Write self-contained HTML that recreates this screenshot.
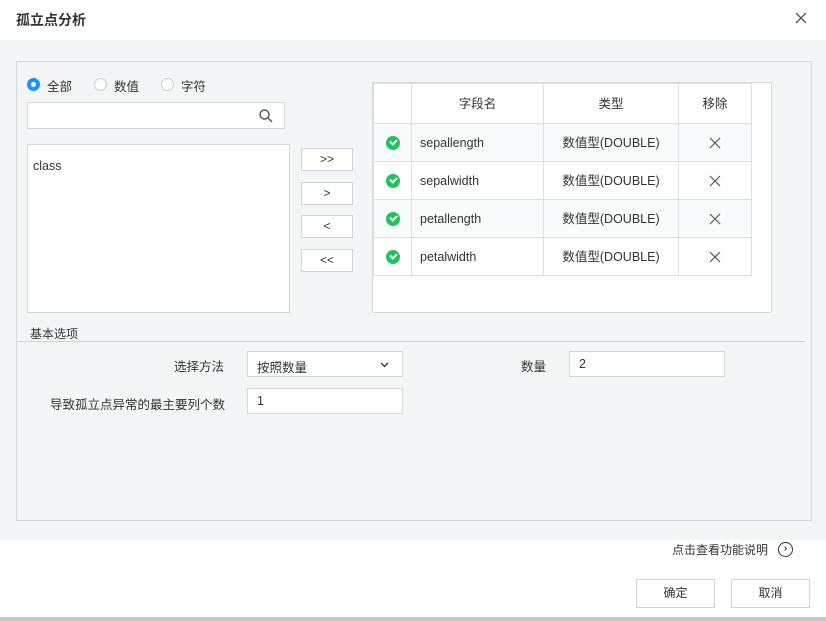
<!DOCTYPE html>
<html><head><meta charset="utf-8"><style>
*{box-sizing:border-box;margin:0;padding:0}
body{width:826px;height:621px;background:#fff;font-family:"Liberation Sans","Noto Sans CJK SC",sans-serif;font-size:12.5px;color:#333;position:relative;overflow:hidden}
.a{position:absolute}
.box{position:absolute;background:#fff;border:1px solid #d6d8dc}
.btn{position:absolute;background:#fff;border:1px solid #d0d3d8;text-align:center;font-size:12px;line-height:20px}
.radio{position:absolute;width:13px;height:13px;border:1px solid #c8ccd2;border-radius:50%;background:#fff}
table{border-collapse:collapse;position:absolute;left:373px;top:83px}
td{border:1px solid #dcdfe3;height:38px;font-size:12.5px;line-height:16px;vertical-align:middle;padding:0}
tr:nth-child(odd) td{background:#fff}
tr:nth-child(even) td{background:#f9fafc}
.chk{width:14px;height:14px;border-radius:50%;background:#1fc35d;margin:auto;position:relative}
.chk:after{content:"";position:absolute;left:4px;top:3px;width:5px;height:3px;border-left:2px solid #fff;border-bottom:2px solid #fff;transform:rotate(-45deg)}
.x{display:block;margin:auto}
</style></head><body>
<div class="a" style="left:16px;top:10px;font-size:14px;font-weight:bold;color:#333">孤立点分析</div>
<svg class="a" style="left:795px;top:12px" width="12" height="12"><path d="M1 1L11 11M11 1L1 11" stroke="#555" stroke-width="1.3"/></svg>
<div class="a" style="left:0;top:40px;width:826px;height:500px;background:#f4f5f7"></div>
<div class="a" style="left:16px;top:61px;width:796px;height:460px;border:1px solid #d6d8dc;background:#f4f5f7"></div>
<div class="radio" style="left:27px;top:78px;border:4px solid #1e90ff"></div>
<div class="a" style="left:47px;top:76px">全部</div>
<div class="radio" style="left:94px;top:78px"></div>
<div class="a" style="left:114px;top:76px">数值</div>
<div class="radio" style="left:161px;top:78px"></div>
<div class="a" style="left:181px;top:76px">字符</div>
<div class="box" style="left:27px;top:102px;width:258px;height:27px"></div>
<svg class="a" style="left:258px;top:108px" width="16" height="16"><circle cx="6.5" cy="6.5" r="4.5" fill="none" stroke="#555" stroke-width="1.4"/><line x1="10" y1="10" x2="14" y2="14" stroke="#555" stroke-width="1.5"/></svg>
<div class="box" style="left:27px;top:144px;width:263px;height:169px"></div>
<div class="a" style="left:33px;top:159px">class</div>
<div class="btn" style="left:301px;top:148px;width:52px;height:23px">&gt;&gt;</div>
<div class="btn" style="left:301px;top:182px;width:52px;height:23px">&gt;</div>
<div class="btn" style="left:301px;top:215px;width:52px;height:23px">&lt;</div>
<div class="btn" style="left:301px;top:249px;width:52px;height:23px">&lt;&lt;</div>
<div class="box" style="left:372px;top:82px;width:400px;height:231px;border-radius:2px"></div>
<table>
<tr><td style="width:38px;height:40px"></td><td style="width:132px;text-align:center">字段名</td><td style="width:135px;text-align:center">类型</td><td style="width:73px;text-align:center">移除</td></tr>
<tr><td><div class="chk"></div></td><td style="padding-left:8px">sepallength</td><td style="text-align:center">数值型(DOUBLE)</td><td><svg class="x" width="12" height="12"><path d="M1 1L11 11M11 1L1 11" stroke="#555" stroke-width="1.2"/></svg></td></tr>
<tr><td><div class="chk"></div></td><td style="padding-left:8px">sepalwidth</td><td style="text-align:center">数值型(DOUBLE)</td><td><svg class="x" width="12" height="12"><path d="M1 1L11 11M11 1L1 11" stroke="#555" stroke-width="1.2"/></svg></td></tr>
<tr><td><div class="chk"></div></td><td style="padding-left:8px">petallength</td><td style="text-align:center">数值型(DOUBLE)</td><td><svg class="x" width="12" height="12"><path d="M1 1L11 11M11 1L1 11" stroke="#555" stroke-width="1.2"/></svg></td></tr>
<tr><td><div class="chk"></div></td><td style="padding-left:8px">petalwidth</td><td style="text-align:center">数值型(DOUBLE)</td><td><svg class="x" width="12" height="12"><path d="M1 1L11 11M11 1L1 11" stroke="#555" stroke-width="1.2"/></svg></td></tr>
</table>
<div class="a" style="left:30px;top:325px;font-size:12px">基本选项</div>
<div class="a" style="left:18px;top:341px;width:787px;height:1px;background:#cfd3d9"></div>
<div class="a" style="left:174px;top:356px">选择方法</div>
<div class="box" style="left:247px;top:351px;width:156px;height:26px;padding:5px 9px">按照数量<svg style="position:absolute;right:13px;top:10px" width="9" height="6"><path d="M1 1L4.5 4.5L8 1" fill="none" stroke="#333" stroke-width="1.3"/></svg></div>
<div class="a" style="left:521px;top:356px">数量</div>
<div class="box" style="left:569px;top:351px;width:156px;height:26px;padding:5px 9px">2</div>
<div class="a" style="left:50px;top:394px">导致孤立点异常的最主要列个数</div>
<div class="box" style="left:247px;top:388px;width:156px;height:26px;padding:5px 9px">1</div>
<div class="a" style="left:672px;top:541px;font-size:12px">点击查看功能说明</div>
<div class="a" style="left:778px;top:542px;width:15px;height:15px;border:1.5px solid #333;border-radius:50%;font-size:10px;line-height:12px;text-align:center;font-weight:bold">›</div>
<div class="btn" style="left:636px;top:579px;width:79px;height:29px;line-height:27px">确定</div>
<div class="btn" style="left:731px;top:579px;width:79px;height:29px;line-height:27px">取消</div>
<div class="a" style="left:0;top:617px;width:826px;height:4px;background:#c8c8c8"></div>
</body></html>
